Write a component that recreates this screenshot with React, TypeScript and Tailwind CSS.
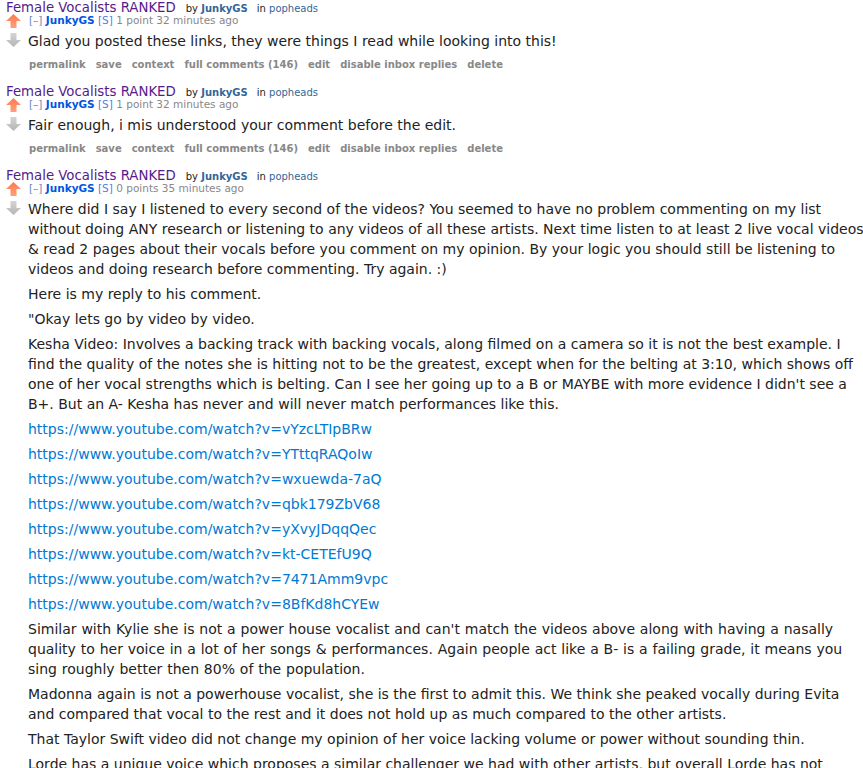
const font = { fontFamily: '"DejaVu Sans", Verdana, sans-serif' }

function UpArrow() {
  return (
    <svg width="15" height="14" viewBox="0 0 15 14">
      <defs>
        <linearGradient id="up" x1="0" y1="0" x2="0" y2="1">
          <stop offset="0" stopColor="#ff7a4d" />
          <stop offset="1" stopColor="#ffa07a" />
        </linearGradient>
      </defs>
      <path d="M7.5 0 L15 7 L10.5 7 L10.5 14 L4.5 14 L4.5 7 L0 7 Z" fill="url(#up)" />
    </svg>
  )
}

function DownArrow() {
  return (
    <svg width="15" height="14" viewBox="0 0 15 14">
      <defs>
        <linearGradient id="down" x1="0" y1="0" x2="0" y2="1">
          <stop offset="0" stopColor="#d4d4d4" />
          <stop offset="1" stopColor="#b5b5b5" />
        </linearGradient>
      </defs>
      <path d="M4.5 0 L10.5 0 L10.5 7 L15 7 L7.5 14 L0 7 L4.5 7 Z" fill="url(#down)" />
    </svg>
  )
}

const buttons = ['permalink', 'save', 'context', 'full comments (146)', 'edit', 'disable inbox replies', 'delete']

function Comment({ points, time, children }: { points: string; time: string; children: React.ReactNode }) {
  return (
    <div className="pb-[13px]">
      <div className="pl-[6px] h-[14px] leading-[13px] whitespace-nowrap">
        <a className="text-[13.3px] text-[#551a8b]">Female Vocalists RANKED</a>
        <span className="text-[10px] text-[#222] ml-[10px]">
          by <span className="font-bold text-[#336699]">JunkyGS</span>
        </span>
        <span className="text-[10px] text-[#222] ml-[9px]">
          in <span className="text-[#336699]">popheads</span>
        </span>
      </div>
      <div className="flex">
        <div className="w-[28px] pl-[6px] flex flex-col gap-[5px] shrink-0">
          <UpArrow />
          <DownArrow />
        </div>
        <div className="min-w-0">
          <div className="text-[10.5px] leading-[12px] text-[#888] whitespace-nowrap pl-[1px]">
            <span className="text-[#6a8ab8]">[–]</span>{' '}
            <span className="font-bold text-[#0055df]">JunkyGS</span>{' '}
            <span className="text-[#4f7fdf]">[S]</span> {points} {time}
          </div>
          <div className="mt-[5px] w-[840px] text-[14px] leading-[20px] text-[#222] flex flex-col gap-[5px]">
            {children}
          </div>
          <div className="mt-[8px] flex gap-[10px] pl-[1px] text-[10px] leading-[12px] font-bold text-[#888] whitespace-nowrap">
            {buttons.map((b) => (
              <span key={b}>{b}</span>
            ))}
          </div>
        </div>
      </div>
    </div>
  )
}

const links = [
  'vYzcLTIpBRw',
  'YTttqRAQoIw',
  'wxuewda-7aQ',
  'qbk179ZbV68',
  'yXvyJDqqQec',
  'kt-CETEfU9Q',
  '7471Amm9vpc',
  '8BfKd8hCYEw',
]

export default function App() {
  return (
    <div className="bg-white w-[863px] h-[768px] overflow-hidden" style={font}>
      <Comment points="1 point" time="32 minutes ago">
        <p>Glad you posted these links, they were things I read while looking into this!</p>
      </Comment>
      <Comment points="1 point" time="32 minutes ago">
        <p>Fair enough, i mis understood your comment before the edit.</p>
      </Comment>
      <Comment points="0 points" time="35 minutes ago">
        <p>
          Where did I say I listened to every second of the videos? You seemed to have no problem commenting on my list
          without doing ANY research or listening to any videos of all these artists. Next time listen to at least 2 live
          vocal videos &amp; read 2 pages about their vocals before you comment on my opinion. By your logic you should
          still be listening to videos and doing research before commenting. Try again. :)
        </p>
        <p>Here is my reply to his comment.</p>
        <p>"Okay lets go by video by video.</p>
        <p>
          Kesha Video: Involves a backing track with backing vocals, along filmed on a camera so it is not the best
          example. I find the quality of the notes she is hitting not to be the greatest, except when for the belting at
          3:10, which shows off one of her vocal strengths which is belting. Can I see her going up to a B or MAYBE with
          more evidence I didn't see a B+. But an A- Kesha has never and will never match performances like this.
        </p>
        {links.map((id) => (
          <p key={id}>
            <a className="text-[#0079d3]">https://www.youtube.com/watch?v={id}</a>
          </p>
        ))}
        <p className="[word-spacing:0.4px]">
          Similar with Kylie she is not a power house vocalist and can't match the videos above along with having a
          nasally quality to her voice in a lot of her songs &amp; performances. Again people act like a B- is a failing
          grade, it means you sing roughly better then 80% of the population.
        </p>
        <p>
          Madonna again is not a powerhouse vocalist, she is the first to admit this. We think she peaked vocally during
          Evita and compared that vocal to the rest and it does not hold up as much compared to the other artists.
        </p>
        <p>That Taylor Swift video did not change my opinion of her voice lacking volume or power without sounding thin.</p>
        <p>
          Lorde has a unique voice which proposes a similar challenger we had with other artists, but overall Lorde has
          not
        </p>
      </Comment>
    </div>
  )
}
